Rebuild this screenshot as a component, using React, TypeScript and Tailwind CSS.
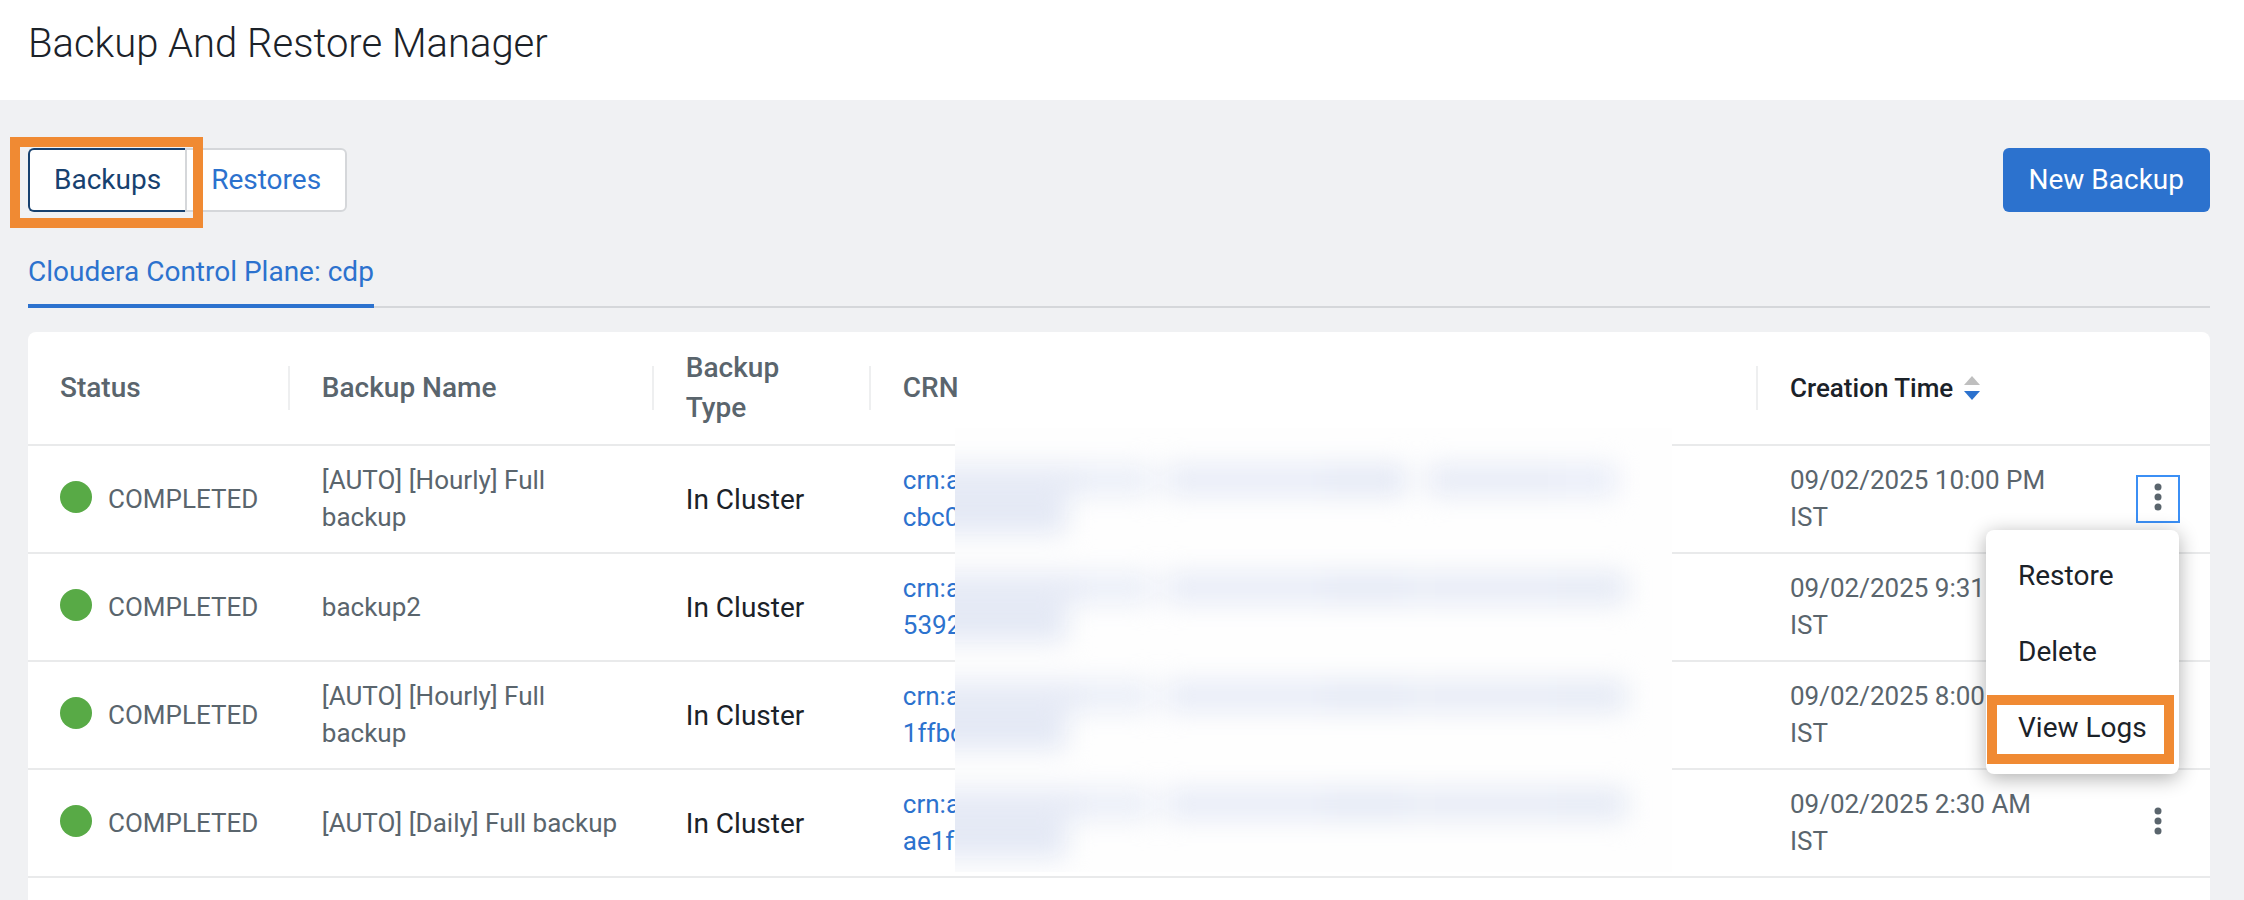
type Backup = {
  name: string;
  type: string;
  crn: [string, string];
  created: string;
};

const backups: Backup[] = [
  { name: '[AUTO] [Hourly] Full backup', type: 'In Cluster', crn: ['crn:a', 'cbc0'], created: '09/02/2025 10:00 PM IST' },
  { name: 'backup2', type: 'In Cluster', crn: ['crn:a', '5392'], created: '09/02/2025 9:31 PM IST' },
  { name: '[AUTO] [Hourly] Full backup', type: 'In Cluster', crn: ['crn:a', '1ffbc'], created: '09/02/2025 8:00 PM IST' },
  { name: '[AUTO] [Daily] Full backup', type: 'In Cluster', crn: ['crn:a', 'ae1f'], created: '09/02/2025 2:30 AM IST' },
];

const columns = ['Status', 'Backup Name', 'Backup Type', 'CRN'];

function KebabIcon() {
  return (
    <svg width="8" height="28" viewBox="0 0 8 28" fill="#5a656d" aria-hidden="true">
      <circle cx="4" cy="4" r="3.5" />
      <circle cx="4" cy="14" r="3.5" />
      <circle cx="4" cy="24" r="3.5" />
    </svg>
  );
}

function SortIcon() {
  return (
    <svg width="16" height="24" viewBox="0 0 16 24" aria-hidden="true">
      <path d="M8 0 L16 9 H0 Z" fill="#bfbfbf" />
      <path d="M8 24 L16 15 H0 Z" fill="#2c72ce" />
    </svg>
  );
}

function Separator() {
  return <span className="absolute top-1/2 right-0 h-11 w-0.5 -translate-y-1/2 bg-[#eeeff0]" />;
}

/* Hides the account part of every CRN behind a soft patch. */
function RedactedPatch() {
  return (
    <div aria-hidden="true" className="absolute -top-[18px] left-[84px] z-10 h-[444px] w-[717px] overflow-hidden bg-[#fefefe]">
      <div className="flex flex-col pt-9 blur-[13px]">
        {backups.map((b, i) => (
          <div key={b.crn[1]} className="flex h-[108px] flex-col">
            <div className="-ml-8 flex h-8">
              <div className="w-[160px] bg-[#e7ebf6]" />
              <div className="mr-3 w-[70px] bg-[#ebeff8]" />
              <div className="w-[160px] bg-[#e8ecf7]" />
              <div className="w-[82px] bg-[#e4e9f5]" />
              <div className={i === 0 ? 'w-5' : 'w-5 bg-[#e9edf7]'} />
              <div className="w-[130px] bg-[#e7ebf6]" />
              <div className={i === 0 ? 'w-[60px] bg-[#e9edf8]' : 'w-[70px] bg-[#e5eaf5]'} />
            </div>
            <div className="-ml-8 h-[38px] w-[144px] bg-[#e4e9f5]" />
          </div>
        ))}
      </div>
    </div>
  );
}

function ActionsMenu() {
  return (
    <div role="menu" className="absolute top-[55px] right-px z-20 flex w-[193px] flex-col rounded-lg bg-white py-2 text-left shadow-[0_4px_20px_rgba(0,0,0,0.32)]">
      {['Restore', 'Delete', 'View Logs'].map((item) => (
        <button key={item} role="menuitem" className="relative h-[76px] px-8 text-left text-[28px] leading-10 whitespace-nowrap text-[#1b2229]">
          {item}
          {item === 'View Logs' && (
            <span className="absolute top-[5px] right-[5px] bottom-0.5 left-px border-[10px] border-[#f08a33]" />
          )}
        </button>
      ))}
    </div>
  );
}

export default function App() {
  return (
    <div className="flex min-h-screen flex-col bg-[#f0f1f3] font-['Roboto',sans-serif]">
      <header className="h-[100px] bg-white px-7 pt-4">
        <h1 className="text-[40px] leading-[56px] font-light text-[#1b2229]">Backup And Restore Manager</h1>
      </header>

      <main className="flex flex-1 flex-col pt-12 pr-[34px] pl-7">
        <div className="flex items-center justify-between">
          <div className="flex h-16 text-[28px] leading-10">
            <button className="relative z-10 rounded-l-md border-2 border-r-0 border-[#17416f] bg-white px-6 text-[#17416f]">
              Backups
              <span className="absolute -top-[13px] -right-[18px] -bottom-[18px] -left-5 border-[10px] border-[#f08a33]" />
            </button>
            <button className="rounded-r-md border-2 border-[#d5d7da] bg-white px-6 text-[#2c72ce]">Restores</button>
          </div>
          <button className="h-16 rounded-md bg-[#2c72ce] px-[26px] text-[28px] leading-10 text-white">New Backup</button>
        </div>

        <nav className="mt-8 flex h-16 border-b-2 border-[#d5d7da]">
          <a href="#cdp" className="-mb-0.5 border-b-4 border-[#2c72ce] pt-2 text-[28px] leading-10 text-[#2c72ce]">
            Cloudera Control Plane: cdp
          </a>
        </nav>

        <section className="mt-6 flex-1 rounded-t-lg bg-white">
          <table className="w-full table-fixed border-separate border-spacing-0 text-left">
            <colgroup>
              <col className="w-[12%]" />
              <col className="w-[364px]" />
              <col className="w-[217px]" />
              <col />
              <col className="w-[348px]" />
              <col className="w-[104px]" />
            </colgroup>
            <thead>
              <tr className="text-[28px] leading-10 text-[#5a656d]">
                {columns.map((c) => (
                  <th key={c} className="relative border-b-2 border-[#e9eaeb] px-8 py-4 font-medium">
                    {c}
                    <Separator />
                  </th>
                ))}
                <th className="border-b-2 border-[#e9eaeb] px-8 py-4 font-medium">
                  <button className="flex items-center gap-[11px] text-[26px] leading-10 text-[#1b2229]">
                    Creation Time <SortIcon />
                  </button>
                </th>
                <th className="border-b-2 border-[#e9eaeb]" aria-label="Actions" />
              </tr>
            </thead>
            <tbody className="text-[26px] leading-[37px] text-[#5a656d] [&_td]:border-b-2 [&_td]:border-[#e9eaeb] [&_td]:py-4">
              {backups.map((b, i) => (
                <tr key={b.crn[1]}>
                  <td className="px-8">
                    <div className="flex items-start gap-4">
                      <span className="size-8 shrink-0 rounded-full bg-[#58aa46]" />
                      COMPLETED
                    </div>
                  </td>
                  <td className="px-8">{b.name}</td>
                  <td className="px-8 text-[28px] text-[#1b2229]">{b.type}</td>
                  <td className="relative px-8">
                    <a href="#crn" className="text-[#2c72ce]">
                      {b.crn[0]}
                      <br />
                      {b.crn[1]}
                    </a>
                    {i === 0 && <RedactedPatch />}
                  </td>
                  <td className="px-8">{b.created}</td>
                  <td>
                    <div className="relative mx-auto w-11">
                      <button
                        aria-label="Backup actions"
                        className={
                          i === 0
                            ? 'flex h-12 w-11 items-center justify-center border-2 border-[#3b8ff5] pb-1'
                            : 'flex h-12 w-11 items-center justify-center pb-1'
                        }
                      >
                        <KebabIcon />
                      </button>
                      {i === 0 && <ActionsMenu />}
                    </div>
                  </td>
                </tr>
              ))}
            </tbody>
          </table>
        </section>
      </main>
    </div>
  );
}
